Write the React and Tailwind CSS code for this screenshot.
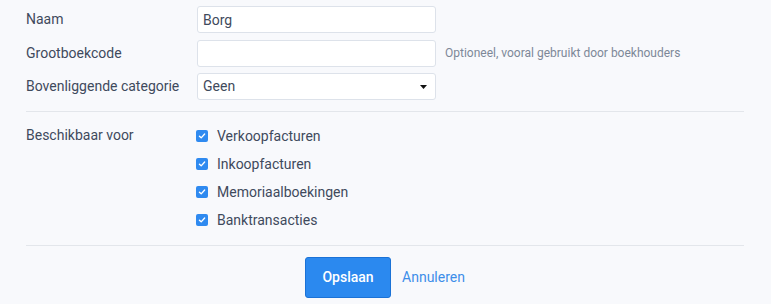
import { useState } from 'react';

const labelCls = 'w-[171px] shrink-0 text-[14px] text-[#3f4a5c]';
const inputCls =
  'w-[239px] h-[27px] bg-white border border-[#dde2ea] rounded-[3px] px-[5px] text-[14px] text-[#3f4a5c] focus:outline-none';

const OPTIES = ['Verkoopfacturen', 'Inkoopfacturen', 'Memoriaalboekingen', 'Banktransacties'];

function Checkbox({ checked, onChange, label }) {
  return (
    <label className="flex items-center h-[28px] cursor-pointer">
      <span
        onClick={onChange}
        className={`w-[12px] h-[12px] rounded-[2px] flex items-center justify-center ${
          checked ? 'bg-[#2f8af0]' : 'bg-white border border-[#c9cfd8]'
        }`}
      >
        {checked && (
          <svg width="8" height="8" viewBox="0 0 10 10" fill="none">
            <path d="M1.8 5.2 L4 7.3 L8.3 2.6" stroke="white" strokeWidth="1.7" strokeLinecap="round" strokeLinejoin="round" />
          </svg>
        )}
      </span>
      <span className="ml-[9px] text-[14px] text-[#3f4a5c]">{label}</span>
    </label>
  );
}

export default function App() {
  const [naam, setNaam] = useState('Borg');
  const [code, setCode] = useState('');
  const [checks, setChecks] = useState(OPTIES.map(() => true));

  return (
    <div
      className="w-[771px] h-[304px] bg-[#f8f9fc] pl-[26px] pr-[27px] pt-[6px]"
      style={{ fontFamily: 'Roboto, "Noto Sans", sans-serif' }}
    >
      <div className="flex flex-col gap-[6.5px] pb-[11px] border-b border-[#e3e6eb]">
        <div className="flex items-center">
          <div className={labelCls}>Naam</div>
          <input className={inputCls} value={naam} onChange={(e) => setNaam(e.target.value)} />
        </div>
        <div className="flex items-center">
          <div className={labelCls}>Grootboekcode</div>
          <input className={inputCls} value={code} onChange={(e) => setCode(e.target.value)} />
          <span className="ml-[9px] text-[12px] text-[#7d8898]">
            Optioneel, vooral gebruikt door boekhouders
          </span>
        </div>
        <div className="flex items-center">
          <div className={labelCls}>Bovenliggende categorie</div>
          <div className={`${inputCls} flex items-center justify-between pr-[8px]`}>
            <span>Geen</span>
            <svg width="7" height="4" viewBox="0 0 7 4">
              <path d="M0 0 H7 L3.5 4 Z" fill="#111" />
            </svg>
          </div>
        </div>
      </div>

      <div className="flex pt-[10px] pb-[11px] border-b border-[#e3e6eb]">
        <div className={`${labelCls} h-[28px] flex items-center -mt-[1px]`}>Beschikbaar voor</div>
        <div className="flex flex-col -ml-[1px]">
          {OPTIES.map((o, i) => (
            <Checkbox
              key={o}
              label={o}
              checked={checks[i]}
              onChange={() => setChecks((c) => c.map((v, j) => (j === i ? !v : v)))}
            />
          ))}
        </div>
      </div>

      <div className="flex items-center justify-center pt-[11px]">
        <button className="w-[86px] h-[41px] bg-[#2b89ef] border border-[#1b72d6] rounded-[3px] text-white text-[14px] font-medium">
          Opslaan
        </button>
        <button className="ml-[11px] text-[14px] text-[#3d8ee9]">Annuleren</button>
      </div>
    </div>
  );
}
